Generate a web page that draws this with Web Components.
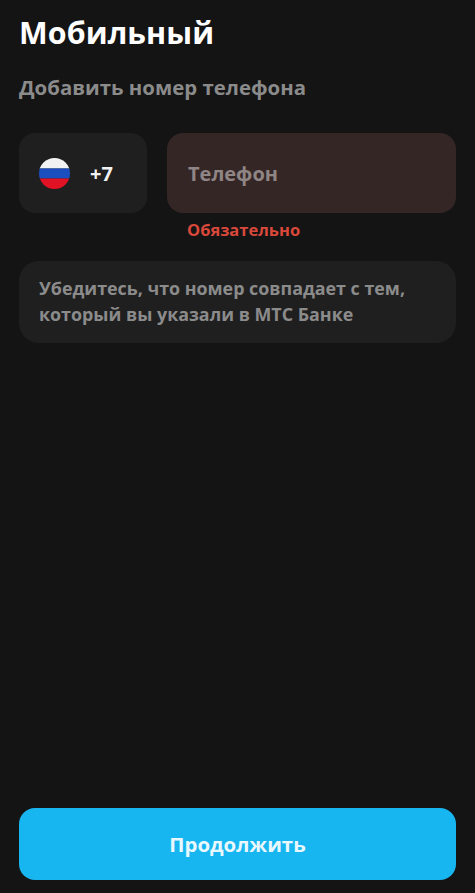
<!doctype html>
<html lang="ru">
<head>
<meta charset="utf-8">
<title>Мобильный</title>
<style>
	html,body{height:100%;margin:0;background:#141414}
	body{font-family:"Open Sans","Noto Sans",sans-serif}
</style>
</head>
<body>
<phone-screen>
	<span slot="title">Мобильный</span>
	<span slot="subtitle">Добавить номер телефона</span>
	<phone-form slot="form" placeholder="Телефон" error="Обязательно" code="+7"></phone-form>
	<hint-card slot="form">Убедитесь, что номер совпадает с тем, который вы указали в МТС Банке</hint-card>
	<primary-button slot="action">Продолжить</primary-button>
</phone-screen>
<script>
const define = (tag, html, init) => customElements.define(tag, class extends HTMLElement {
	connectedCallback() {
		if (this.shadowRoot) return;
		this.attachShadow({mode: 'open'}).innerHTML = html;
		if (init) init(this);
	}
});

define('phone-screen', `
	<style>
		:host{display:flex;flex-direction:column;box-sizing:border-box;height:893px;padding:12px 19px 13px 19px;color:#fff}
		h1{margin:0;font-size:30.4px;line-height:42px;font-weight:700;letter-spacing:.1px}
		h2{margin:19px 0 0;font-size:20.4px;line-height:28px;font-weight:700;color:#8b8b8b}
		.form{display:flex;flex-direction:column;gap:18px;margin-top:32px}
		.action{margin-top:auto}
	</style>
	<h1><slot name="title"></slot></h1>
	<h2><slot name="subtitle"></slot></h2>
	<div class="form"><slot name="form"></slot></div>
	<div class="action"><slot name="action"></slot></div>
`);

define('flag-ru', `
	<style>
		:host{display:block;width:31px;height:31px}
		svg{display:block}
	</style>
	<svg viewBox="0 0 31 31" width="31" height="31">
		<clipPath id="c"><circle cx="15.5" cy="15.5" r="15.5"/></clipPath>
		<g clip-path="url(#c)">
			<rect width="31" height="10.5" fill="#f2f2f2"/>
			<rect y="10.5" width="31" height="10" fill="#1b4fc0"/>
			<rect y="20.5" width="31" height="10.5" fill="#e01224"/>
		</g>
	</svg>
`);

define('phone-form', `
	<style>
		:host{display:grid;grid-template-columns:128px 1fr;column-gap:20px;row-gap:5px}
		.code,.field{height:80px;border-radius:16px;display:flex;align-items:center;box-sizing:border-box}
		.code{background:#1f1f1f;padding-left:20px;gap:20px;color:#f2f2f2;font-size:20px;font-weight:700}
		.field{background:#352626;padding-left:21px;color:#8f8585;font-size:20px;font-weight:700}
		.error{grid-column:2;padding-left:20px;color:#d9483b;font-size:16.5px;line-height:24px;font-weight:700}
	</style>
	<div class="code"><flag-ru></flag-ru><span id="code"></span></div>
	<div class="field" id="ph"></div>
	<div class="error" id="err"></div>
`, el => {
	el.shadowRoot.getElementById('code').textContent = el.getAttribute('code');
	el.shadowRoot.getElementById('ph').textContent = el.getAttribute('placeholder');
	el.shadowRoot.getElementById('err').textContent = el.getAttribute('error');
});

define('hint-card', `
	<style>
		:host{display:block;box-sizing:border-box;height:82px;margin-top:1px;padding:14px 20px;background:#1f1f1f;border-radius:20px;color:#8b8b8b;font-size:17.85px;line-height:26px;font-weight:700}
	</style>
	<slot></slot>
`);

define('primary-button', `
	<style>
		:host{display:flex;align-items:center;justify-content:center;height:72px;border-radius:16px;background:#18b6f0;color:#e9f8fe;font-size:20.4px;font-weight:700}
	</style>
	<slot></slot>
`);
</script>
</body>
</html>
